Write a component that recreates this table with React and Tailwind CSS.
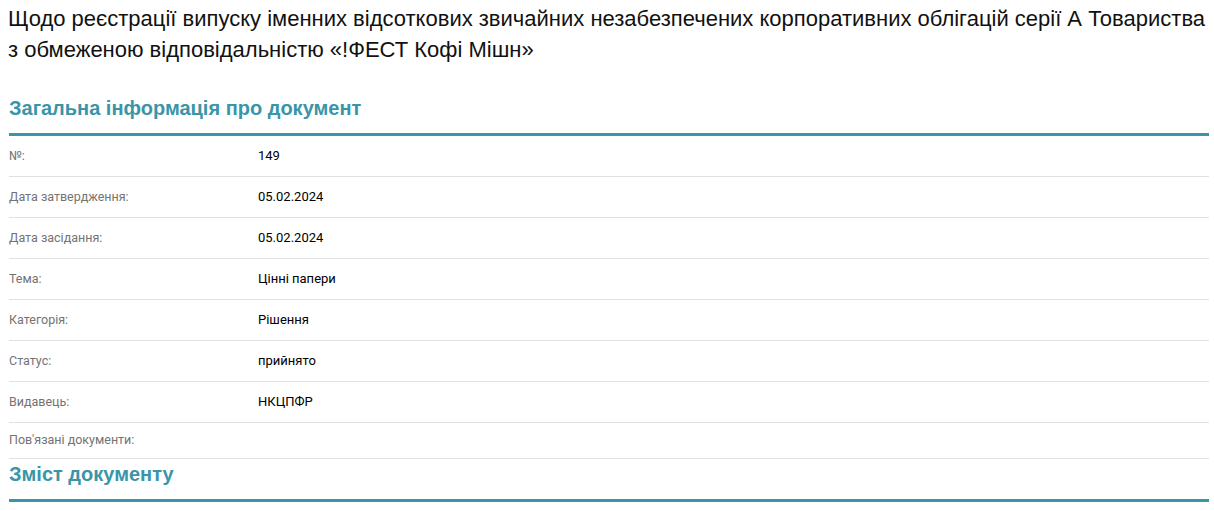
const ROWS = [
  ['№:', '149'],
  ['Дата затвердження:', '05.02.2024'],
  ['Дата засідання:', '05.02.2024'],
  ['Тема:', 'Цінні папери'],
  ['Категорія:', 'Рішення'],
  ['Статус:', 'прийнято'],
  ['Видавець:', 'НКЦПФР'],
];

function SectionTitle({ children }) {
  return (
    <div>
      <h2 className="h-[30px] leading-[30px] text-[20px] font-bold text-[#3a95a8]" style={{ fontFamily: '"Liberation Sans", Arial, sans-serif' }}>
        {children}
      </h2>
      <div className="mt-[10px] h-[3px] bg-[#3a95a8]" />
    </div>
  );
}

export default function App() {
  return (
    <div className="bg-white min-h-[511px] pl-[9px] pr-[5px] pt-[3px]">
      {/* Title */}
      <h1
        className="-ml-px text-[22px] leading-[31px] text-[#111]"
        style={{ fontFamily: '"Liberation Sans", Arial, sans-serif' }}
      >
        Щодо реєстрації випуску іменних відсоткових звичайних незабезпечених корпоративних облігацій серії А Товариства з обмеженою відповідальністю «!ФЕСТ Кофі Мішн»
      </h1>

      <div className="mt-[28px]">
        <SectionTitle>Загальна інформація про документ</SectionTitle>
      </div>

      {/* Info table */}
      <div className="text-[13px]" style={{ fontFamily: 'Roboto, Arial, sans-serif' }}>
        {ROWS.map(([label, value]) => (
          <div key={label} className="flex items-center h-[41px] border-b border-[#e0e0e0]">
            <div className="w-[249px] text-[12.5px] text-[#737373]">{label}</div>
            <div className="text-black">{value}</div>
          </div>
        ))}
        <div className="flex items-center h-[36px] border-b border-[#e0e0e0]">
          <div className="w-[249px] text-[12.5px] text-[#737373]">Пов'язані документи:</div>
        </div>
      </div>

      <SectionTitle>Зміст документу</SectionTitle>
    </div>
  );
}
